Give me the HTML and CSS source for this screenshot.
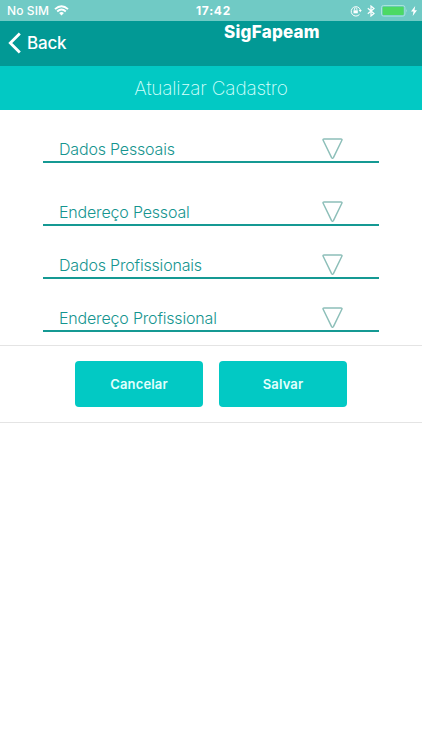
FILE: index.html
```html
<!DOCTYPE html>
<html lang="pt-BR">
<head>
<meta charset="utf-8">
<title>SigFapeam</title>
<link rel="stylesheet" href="styles.css">
</head>
<body>
<div class="status">
  <span class="carrier">No SIM</span>
  <svg class="wifi" width="15" height="11" viewBox="0 0 15 11"><path d="M1 4.1Q7.5-1.7 14 4.1M3.2 6.5Q7.5 2.7 11.8 6.5" fill="none" stroke="#fff" stroke-width="1.9"/><path d="M5.1 8.1Q7.5 6.1 9.9 8.1L7.5 10.5Z" fill="#fff"/></svg>
  <time class="clock">17:42</time>
  <div class="indicators">
    <svg width="12" height="12" viewBox="0 0 12 12"><path d="M9.5 9.4A4.7 4.7 0 1 1 10.4 5" fill="none" stroke="#fff"/><path d="M8.6 5h3.2l-1.5 2.2z" fill="#fff"/><path d="M3.5 5.3h4.3v3H3.5z" fill="#fff"/><path d="M4.4 5.2V4a1.25 1.25 0 0 1 2.5 0v1.2" fill="none" stroke="#fff" stroke-width=".8"/></svg>
    <svg width="8" height="12" viewBox="0 0 8 12"><path d="M.8 3.3 7 8.5 4 11V1l3 2.5L.8 8.7" fill="none" stroke="#fff" stroke-width="1.2"/></svg>
    <svg width="27" height="12" viewBox="0 0 27 12"><rect x=".5" y=".5" width="23.4" height="10.6" rx="2" fill="none" stroke="#a9e4dc"/><rect x="1.7" y="1.7" width="21" height="8.2" rx="1" fill="#4cd964"/><path d="M25 4q1.4 1.8 0 3.6z" fill="#a9e4dc"/></svg>
    <svg class="bolt" width="6" height="10" viewBox="0 0 6 10"><path d="M4.2 0 0 5.6h2.5L1.7 10 6 4.2H3.5z" fill="#fff"/></svg>
  </div>
</div>
<header class="navbar">
  <a class="back"><svg width="14" height="22" viewBox="0 0 14 22"><path d="M11.8 1.5 2.3 11l9.5 9.5" fill="none" stroke="#fff" stroke-width="2.8"/></svg><span class="back-label">Back</span></a>
  <h1 class="brand">SigFapeam</h1>
</header>
<h2 class="title">Atualizar Cadastro</h2>
<main class="sections">
  <div class="row"><span>Dados Pessoais</span><svg class="arrow" viewBox="0 0 20 20"><path d="M2 1h16q1.5 0 .8 1.4L11 18.5q-1 1.7-2 0L1.2 2.4Q.5 1 2 1z"/></svg></div>
  <div class="row spaced"><span>Endereço Pessoal</span><svg class="arrow" viewBox="0 0 20 20"><path d="M2 1h16q1.5 0 .8 1.4L11 18.5q-1 1.7-2 0L1.2 2.4Q.5 1 2 1z"/></svg></div>
  <div class="row"><span>Dados Profissionais</span><svg class="arrow" viewBox="0 0 20 20"><path d="M2 1h16q1.5 0 .8 1.4L11 18.5q-1 1.7-2 0L1.2 2.4Q.5 1 2 1z"/></svg></div>
  <div class="row"><span>Endereço Profissional</span><svg class="arrow" viewBox="0 0 20 20"><path d="M2 1h16q1.5 0 .8 1.4L11 18.5q-1 1.7-2 0L1.2 2.4Q.5 1 2 1z"/></svg></div>
</main>
<div class="actions">
  <button class="btn">Cancelar</button>
  <button class="btn">Salvar</button>
</div>
</body>
</html>
```

FILE: styles.css
```css
* { box-sizing: border-box; }
body { margin: 0; background: #fff; font-family: Inter, "Liberation Sans", sans-serif; }
svg { display: block; flex: none; }
.status {
  display: flex;
  align-items: center;
  height: 21px;
  padding: 0 5px 0 7px;
  background: #70cac5;
  color: #fff;
}
.carrier { width: 47px; font-size: 12px; font-weight: 500; letter-spacing: .1px; white-space: nowrap; }
.clock { margin-left: 127px; width: 40px; font-size: 12px; font-weight: 700; letter-spacing: .7px; white-space: nowrap; }
.indicators { display: flex; align-items: center; gap: 5px; margin-left: auto; }
.indicators svg:nth-child(2) { margin-right: 1px; }
.bolt { margin-left: -2px; }
.navbar { display: flex; height: 45px; background: #029995; color: #fff; }
.back { display: flex; align-items: center; width: 224px; padding: 0 0 2px 8px; }
.back-label { margin-left: 5px; font-size: 17px; font-weight: 500; letter-spacing: -.2px; }
.brand { margin: 0; font-size: 17px; line-height: 22px; font-weight: 800; letter-spacing: .25px; }
.title {
  display: flex;
  align-items: center;
  justify-content: center;
  height: 44px;
  margin: 0;
  background: #02c9c4;
  color: #d5fffc;
  font-size: 19px;
  font-weight: 200;
  letter-spacing: -.2px;
}
.sections { height: 235px; padding: 1px 43px 0; }
.row {
  display: flex;
  align-items: center;
  justify-content: space-between;
  height: 27px;
  margin-top: 26px;
  padding: 1px 36px 0 16px;
  border-bottom: 2px solid #159993;
  color: #16958f;
  font-size: 16px;
  font-weight: 300;
  letter-spacing: -.18px;
}
.row:first-child { margin-top: 25px; }
.spaced { margin-top: 36px; }
.arrow { width: 21px; height: 21px; margin-top: -2px; fill: none; stroke: #8dbfb9; stroke-width: 1.4; }
.actions {
  display: flex;
  justify-content: center;
  gap: 16px;
  height: 78px;
  padding-top: 15px;
  border-top: 1px solid #e4e4e4;
  border-bottom: 1px solid #e4e4e4;
}
.btn {
  width: 128px;
  height: 46px;
  padding: 0;
  border: 0;
  border-radius: 4px;
  background: #02c9c4;
  color: #e3fffd;
  font: 600 13px Inter, "Liberation Sans", sans-serif;
  letter-spacing: .15px;
}
```
